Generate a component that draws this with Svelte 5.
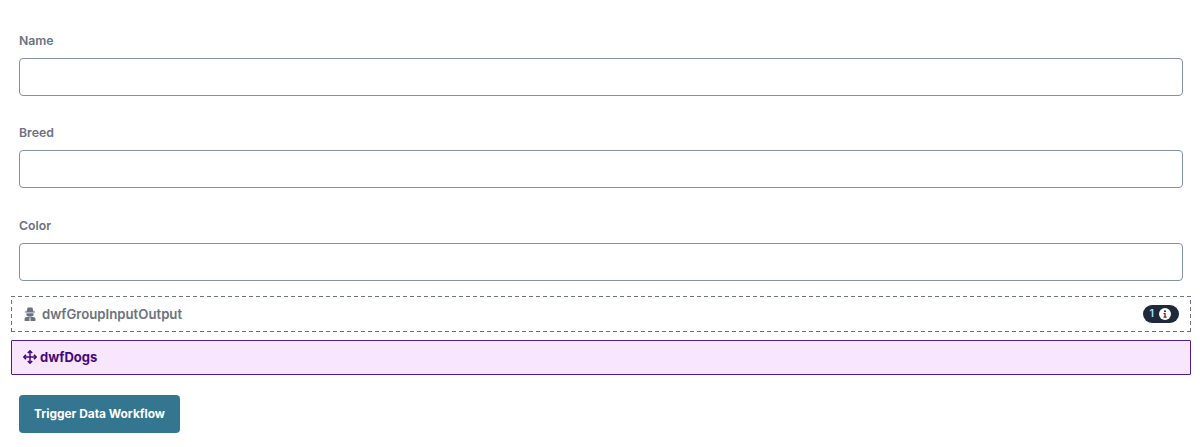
<script lang="ts">
  const fields = ['Name', 'Breed', 'Color'];
</script>

<div class="form">
  <div class="fields">
    {#each fields as field}
      <div class="field">
        <label class="field-label" for={field}>{field}</label>
        <input class="field-input" id={field} type="text" />
      </div>
    {/each}
  </div>

  <div class="group group--io">
    <span class="group-title">
      <svg viewBox="0 0 14 14" width="14" height="14" aria-hidden="true">
        <path d="M4.6 .6 H9.4 L10.4 4.4 H12.2 V5.6 H1.8 V4.4 H3.6 Z" fill="#6b7280" />
        <path d="M3.4 6.2 H10.6 V7.8 C10.6 9 9 9.7 7 9.7 C5 9.7 3.4 9 3.4 7.8 Z" fill="#6b7280" />
        <path d="M1.6 14 V11.8 C1.6 10.8 2.6 10 3.8 10 H10.2 C11.4 10 12.4 10.8 12.4 11.8 V14 Z" fill="#6b7280" />
        <path d="M6.5 10.4 H7.5 V14 H6.5 Z" fill="#fff" />
      </svg>
      dwfGroupInputOutput
    </span>
    <span class="badge">
      <span class="badge-count">1</span>
      <svg viewBox="0 0 12 12" width="12" height="12" aria-hidden="true">
        <circle cx="6" cy="6" r="6" fill="#fff" />
        <rect x="5.2" y="5" width="1.7" height="4.4" fill="#b45309" />
        <rect x="4.5" y="5" width="1.4" height="1" fill="#1e293b" />
        <rect x="4.5" y="8.6" width="3.2" height="1" fill="#1e293b" />
        <circle cx="6" cy="3.2" r="1.05" fill="#1e293b" />
      </svg>
    </span>
  </div>

  <div class="group group--dogs">
    <span class="group-title">
      <svg viewBox="0 0 14 14" width="14" height="14" fill="none" stroke="#450a78" aria-hidden="true">
        <path d="M7 1 V13 M1 7 H13" stroke-width="1.5" />
        <path d="M4.8 3 L7 .9 L9.2 3 M4.8 11 L7 13.1 L9.2 11 M3 4.8 L.9 7 L3 9.2 M11 4.8 L13.1 7 L11 9.2" stroke-width="1.6" />
      </svg>
      dwfDogs
    </span>
  </div>

  <button class="trigger" type="button">Trigger Data Workflow</button>
</div>

<style>
  :global(body) {
    margin: 0;
    background: #fff;
    font-family: Inter, "Liberation Sans", sans-serif;
  }

  .form {
    display: flex;
    flex-direction: column;
    align-items: stretch;
    height: 447px;
    padding: 33px 11px 0;
    box-sizing: border-box;
  }

  .fields {
    display: flex;
    flex-direction: column;
    gap: 29.3px;
    padding: 0 8px;
    margin-bottom: 15.4px;
  }

  .field {
    display: flex;
    flex-direction: column;
  }

  .field-label {
    font-size: 12.25px;
    line-height: 16px;
    font-weight: 600;
    color: #6b7280;
    margin-bottom: 9px;
  }

  .field-input {
    height: 38px;
    box-sizing: border-box;
    border: 1px solid #8492a6;
    border-radius: 4px;
    background: #fff;
  }

  .group {
    display: flex;
    align-items: center;
    justify-content: space-between;
    box-sizing: border-box;
    padding: 0 11px;
  }

  /* longer dashes than a 1px dashed border gives */
  .group--io {
    height: 36px;
    padding: 0 12px;
    background:
      repeating-linear-gradient(90deg, #6b7280 0 4px, transparent 4px 7px) top / 100% 1px no-repeat,
      repeating-linear-gradient(90deg, #6b7280 0 4px, transparent 4px 7px) bottom / 100% 1px no-repeat,
      repeating-linear-gradient(0deg, #6b7280 0 4px, transparent 4px 7px) left / 1px 100% no-repeat,
      repeating-linear-gradient(0deg, #6b7280 0 4px, transparent 4px 7px) right / 1px 100% no-repeat;
    color: #6b7280;
    margin-bottom: 8px;
  }

  .group--dogs {
    height: 35px;
    border: 1px solid #4c1d95;
    border-radius: 1px;
    background: #f7e6fd;
    color: #450a78;
  }

  .group-title {
    display: flex;
    align-items: center;
    gap: 5px;
    font-size: 13.2px;
    font-weight: 600;
  }

  .group--dogs .group-title {
    gap: 3px;
    font-size: 13px;
    font-weight: 700;
  }

  .badge {
    display: flex;
    align-items: center;
    gap: 5px;
    height: 18px;
    padding: 0 8px 0 7px;
    border-radius: 9px;
    background: #1e2a3b;
  }

  .badge-count {
    font-size: 10.5px;
    font-weight: 600;
    color: #a5e3fd;
  }

  .trigger {
    align-self: flex-start;
    margin: 20px 0 0 8px;
    width: 161px;
    height: 38px;
    border: none;
    border-radius: 4px;
    background: #34758f;
    color: #fff;
    font-family: inherit;
    font-size: 11.9px;
    font-weight: 700;
  }
</style>
